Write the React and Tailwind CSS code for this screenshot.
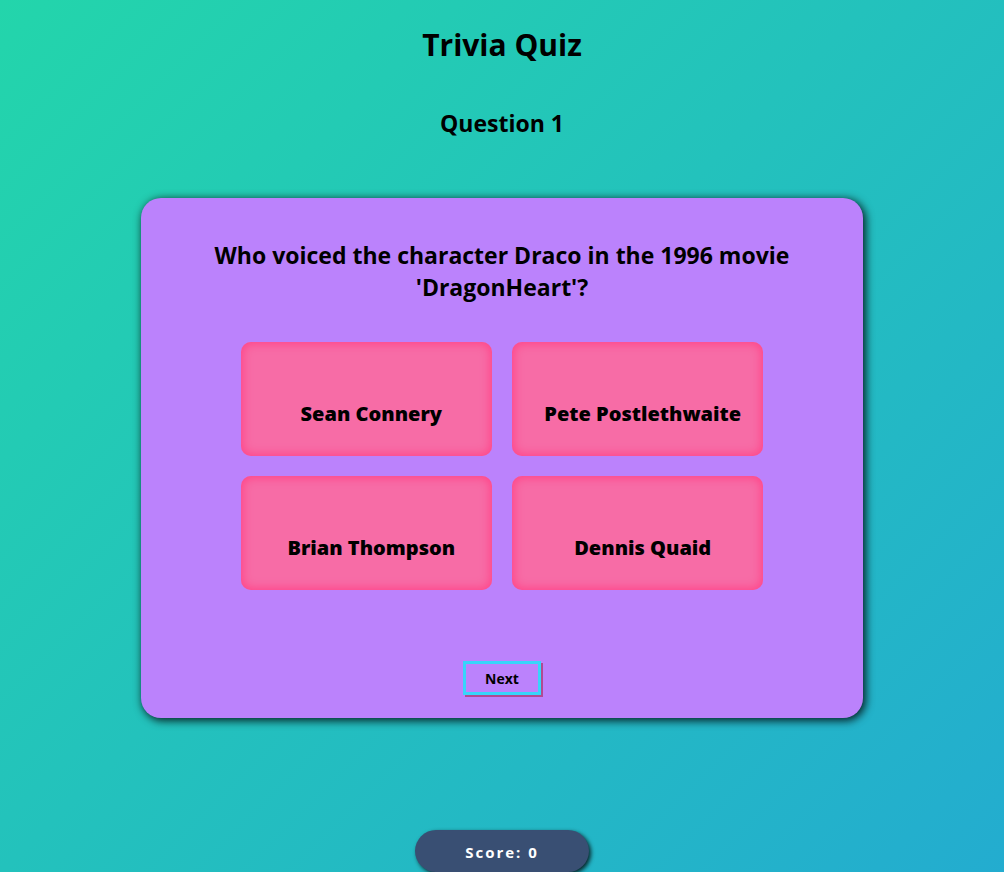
import { useState } from "react";

const answers = ["Sean Connery", "Pete Postlethwaite", "Brian Thompson", "Dennis Quaid"];

export default function App() {
  const [selected, setSelected] = useState(null);

  return (
    <main className="flex min-h-screen flex-col items-center bg-linear-135/srgb from-[#23d5ab] to-[#23a6d5] to-115% pt-[25px] font-['Open_Sans','Noto_Sans',sans-serif] text-black">
      <h1 className="text-[30px] leading-10 font-bold">Trivia Quiz</h1>
      <h2 className="mt-[42px] text-[23px] leading-8 font-bold">Question 1</h2>

      <section className="mt-[59px] flex w-[72%] flex-col items-center rounded-[20px] bg-[#bb82fc] px-[60px] pt-[41px] pb-[23px] shadow-[2px_2px_8px_1px_#000000cc]">
        <h2 className="text-center text-[23px] leading-8 font-bold">
          Who voiced the character Draco in the 1996 movie 'DragonHeart'?
        </h2>

        <div className="mt-[39px] grid w-full grid-cols-2 gap-5 px-10">
          {answers.map((answer) => (
            <button
              key={answer}
              type="button"
              aria-pressed={selected === answer}
              onClick={() => setSelected(answer)}
              className="cursor-pointer rounded-[10px] bg-[#f76ca6] pt-14 pb-[26px] pl-[10px] text-[20px] leading-8 font-extrabold shadow-[inset_0_0_10px_2px_#ff4589]"
            >
              {answer}
            </button>
          ))}
        </div>

        <button
          type="button"
          className="mt-[71px] cursor-pointer border-3 border-[#37d5fa] px-[19px] pt-[5px] pb-[3px] text-[14px] leading-5 font-bold shadow-[2px_2px_0_#b14a92]"
        >
          Next
        </button>
      </section>

      <p className="mt-28 rounded-full bg-[#394f73] px-[50px] pt-[10px] pb-2 text-[15px] leading-6 font-bold tracking-[2px] text-white shadow-[2px_2px_4px_#000000cc]">
        Score: 0
      </p>
    </main>
  );
}
